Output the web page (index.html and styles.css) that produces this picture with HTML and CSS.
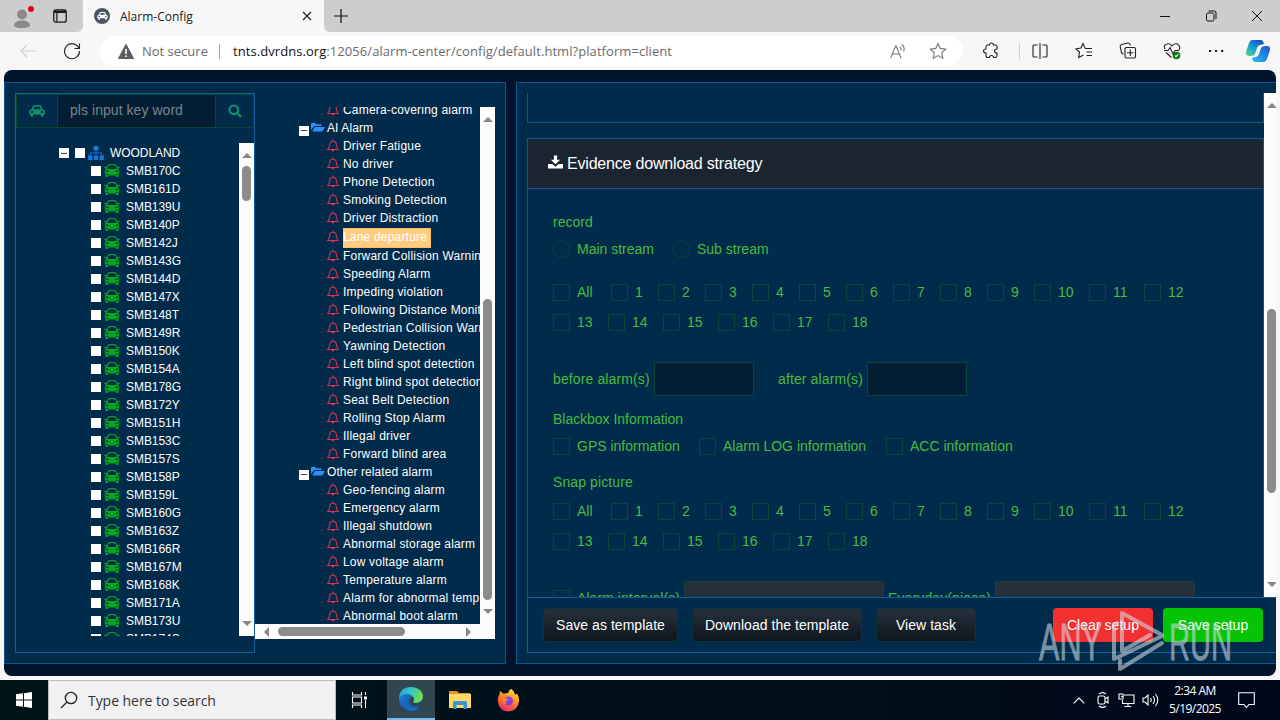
FILE: index.html
```html
<!DOCTYPE html>
<html lang="en">
<head>
    <meta charset="UTF-8">
    <title>Alarm-Config</title>
    <link rel="stylesheet" href="styles.css">
</head>
<body>

    <!-- shared icons -->
    <svg class="defs">
        <symbol id="car" viewBox="0 0 16 12">
            <path fill-rule="evenodd" d="M3.6 1.2Q4 0 5.300 0H10.700Q12 0 12.400 1.200L13.300 4.200Q15.800 4.500 15.800 6.500V9.500H14.300V10.800A1.200 1.200 0 0 1 11.900 10.800V9.500H4.100V10.800A1.200 1.200 0 0 1 1.700 10.800V9.500H.2V6.500Q.2 4.500 2.700 4.200ZM5.300 1.600L4.500 4.200H11.500L10.700 1.600ZM3.200 5.700A1.200 1.200 0 1 0 3.200 8.100A1.200 1.200 0 1 0 3.200 5.700ZM12.800 5.700A1.200 1.200 0 1 0 12.800 8.100A1.200 1.200 0 1 0 12.800 5.700Z"/>
        </symbol>
        <symbol id="taxi" viewBox="0 0 16 13">
            <path d="M2.500 4.500L4.500 1Q8 0 11.500 1L13.500 4.500M.3 3L2.500 4M15.700 3L13.500 4" fill="none" stroke="currentColor" stroke-width="1.200"/>
            <path d="M.8 6Q1 4.200 3 4.200L5 5H11L13 4.200Q15 4.200 15.200 6V10L14.500 11V13H12V11.500H4V13H1.500V11L.8 10Z"/>
            <path d="M1.500 5.800L4.800 7.200L4 8.300L2 7.600ZM14.500 5.800L11.200 7.200L12 8.300L14 7.600ZM2 9.500L4 10.300V10.900L2 10.500ZM14 9.500L12 10.300V10.900L14 10.500Z" fill="#033d2c"/>
        </symbol>
        <symbol id="bell" viewBox="0 0 12 13">
            <path d="M.7 10.500H11.300Q9.500 8.500 9.300 5.500Q9.200 2.200 6 2.200Q2.800 2.200 2.700 5.500Q2.500 8.500.7 10.500ZM6 .6V2.200" fill="none" stroke="currentColor" stroke-width="1.100"/>
            <path d="M4.300 10.800H7.700Q7.400 12.500 6 12.500Q4.600 12.500 4.300 10.800Z"/>
        </symbol>
        <symbol id="folder" viewBox="0 0 14 9">
            <path d="M0 7V.8Q0 0 .8 0H4.300L5.300 1.200H10.500V3H3.200ZM1.300 8.500L3.700 4H13.800L11.500 8.500Z"/>
        </symbol>
        <symbol id="sitemap" viewBox="0 0 16 14">
            <path d="M5.500 0H10.500V4.500H5.500ZM0 9.500H4.500V14H0ZM5.800 9.500H10.200V14H5.800ZM11.500 9.500H16V14H11.500Z"/>
            <path d="M8 4V10M2.300 10V7H13.700V10" fill="none" stroke="currentColor"/>
        </symbol>
    </svg>

    <header class="tabbar">
        <div class="tab-left">
            <svg class="profile" viewBox="0 0 24 24"><circle cx="11" cy="9.500" r="5" fill="#8b8886"/><path d="M3 21Q3 15.500 11 15.500T19 21Q17 23 11 23T3 21Z" fill="#8b8886"/><circle cx="20" cy="4" r="3" fill="#e20613"/></svg>
            <svg class="tabs-icon" viewBox="0 0 14 14"><rect x=".8" y=".8" width="12.400" height="12.400" rx="2" fill="none" stroke="#1a1a1a" stroke-width="1.300"/><path d="M1 1.500H13V4H4.500V13H3.300V4H1Z" fill="#1a1a1a"/></svg>
        </div>
        <div class="tab">
            <span class="favicon"><svg><use href="#car"/></svg></span>
            <span class="tab-title">Alarm-Config</span>
            <svg class="tab-close" viewBox="0 0 10 10"><path d="M1 1L9 9M9 1L1 9"/></svg>
        </div>
        <div class="tab-rest">
            <svg class="plus" viewBox="0 0 14 14"><path d="M7 0V14M0 7H14"/></svg>
            <div class="window-buttons">
                <svg viewBox="0 0 12 12"><path d="M1 6.500H11"/></svg>
                <svg viewBox="0 0 12 12"><rect x="1.500" y="3" width="7.500" height="8" rx="1.500"/><path d="M3.500 1H9Q11 1 11 3V9"/></svg>
                <svg viewBox="0 0 12 12"><path d="M1 1L11 11M11 1L1 11"/></svg>
            </div>
        </div>
    </header>

    <div class="toolbar">
        <svg class="back" viewBox="0 0 16 14"><path d="M16 7H1M7 1L1 7L7 13"/></svg>
        <svg class="reload" viewBox="0 0 18 18"><path d="M16 6.500A7.500 7.500 0 1 0 16.500 9M16.500 1.500V6.500H11.500"/></svg>
        <div class="address">
            <svg class="warn" viewBox="0 0 16 15"><path d="M8 .5L15.700 15H.3Z" fill="#5c5c5c" stroke="#5c5c5c" stroke-linejoin="round"/><path d="M8 5V10M8 11.500V13" stroke="#fff" stroke-width="1.600"/></svg>
            <span class="not-secure">Not secure</span>
            <span class="divider"></span>
            <span class="url"><b>tnts.dvrdns.org</b>:12056/alarm-center/config/default.html?platform=client</span>
            <svg class="read" viewBox="0 0 16 16"><path d="M.7 15L5.500 3H6.200L11 15M2.500 11H9.300M10 4Q11.500 5.500 10.700 7.500M12 1.500Q15.500 4.500 13.500 8.500"/></svg>
            <svg class="star" viewBox="0 0 18 18"><path d="M9 1.500L11.300 6.400L16.700 7.100L12.800 10.800L13.800 16.200L9 13.600L4.200 16.200L5.200 10.800L1.300 7.100L6.700 6.400Z"/></svg>
        </div>
        <div class="tools">
            <svg viewBox="0 0 18 18"><path d="M5 3H7.500Q7.500 1 9.500 1T11.500 3H13Q15 3 15 5V7Q12.500 7 12.500 9T15 11V13Q15 15.500 13 15.500H11.500Q11.500 13.500 9.500 13.500T7.500 15.500H6Q4 15.500 4 13.500V11Q1.500 11 1.500 9T4 7V5Q4 3 5 3Z"/></svg>
            <span class="tool-line"></span>
            <svg viewBox="0 0 18 18"><path d="M6.500 3H3Q2 3 2 4V14Q2 15 3 15H6.500M11.500 3H15Q16 3 16 4V14Q16 15 15 15H11.500M9 1V17"/></svg>
            <svg viewBox="0 0 18 18"><path d="M11 6.500H10.300L8 1.500L6 6L1 6.800L4.500 10L3.700 15.500L8.500 13M11 6.500H17M11.500 10H17M11.500 13.500H17"/></svg>
            <svg viewBox="0 0 18 18"><path d="M4.500 12Q3 12 2.500 10.500L1.200 4.500Q1 3 2.500 2.500L9 1Q10.700.8 11.500 3.500M7 5.500H15Q16.500 5.500 16.500 7V14.500Q16.500 16 15 16H7.500Q6 16 6 14.500V6.500ZM11.300 7.500V14M8 10.700H14.500"/></svg>
            <svg viewBox="0 0 18 18"><path d="M2 7Q0 3 4 2Q7 1 9 4Q11 1 14.500 2Q18 4 16 8M1 8.500H5L7 5.500L10 12L12 8.500H16M3 10.500L8.500 15.500"/><circle cx="13.500" cy="13.500" r="3.800" fill="#107c10" stroke="none"/><path d="M12 13.500L13 14.700L15.200 12.300" stroke="#fff"/></svg>
            <svg viewBox="0 0 18 18"><path d="M2 9H4.200M8 9H10.200M14 9H16.200" stroke-width="2.200"/></svg>
        </div>
        <svg class="copilot" viewBox="0 0 24 22">
            <defs>
                <linearGradient id="cg" x1="0" y1="1" x2=".7" y2="0"><stop offset="0" stop-color="#58d68a"/><stop offset=".5" stop-color="#17a5cf"/><stop offset="1" stop-color="#1556c9"/></linearGradient>
                <linearGradient id="ch" x1="0" y1="1" x2="1" y2="0"><stop offset="0" stop-color="#1fc0f5"/><stop offset="1" stop-color="#2353cf"/></linearGradient>
            </defs>
            <path d="M6 0H15Q17 0 18 4L14 5Q12 5 11 8L9 14Q8 16 5 16H3Q-1 16 .3 11L3 3Q4 0 6 0Z" fill="url(#cg)"/>
            <path d="M18 22H9Q7 22 6 18L10 17Q12 17 13 14L15 8Q16 6 19 6H21Q25 6 23.700 11L21 19Q20 22 18 22Z" fill="url(#ch)"/>
        </svg>
    </div>

    <main class="page">
        <section class="panel left-panel">
            <div class="vehicles">
                <div class="search">
                    <span class="search-car"><svg><use href="#car"/></svg></span>
                    <span class="search-input">pls input key word</span>
                    <span class="search-btn"><svg viewBox="0 0 14 14"><circle cx="5.800" cy="5.800" r="4.300" fill="none" stroke="currentColor" stroke-width="2.200"/><path d="M9 9L13 13" stroke="currentColor" stroke-width="2.400"/></svg></span>
                </div>
                <div class="tree-wrap">
                    <div class="tree" id="vehicleTree">
                        <div class="row root"><i class="toggle"></i><i class="check"></i><svg class="site"><use href="#sitemap"/></svg><span>WOODLAND</span></div>
                    </div>
                    <div class="vbar"><i class="up"></i><i class="thumb"></i><i class="down"></i></div>
                </div>
            </div>
            <div class="alarms">
                <div class="alarm-tree" id="alarmTree"></div>
                <div class="vbar"><i class="up"></i><i class="thumb"></i><i class="down"></i></div>
                <div class="hbar"><i class="prev"></i><i class="thumb"></i><i class="next"></i></div>
            </div>
        </section>

        <section class="panel right-panel">
            <div class="scroll">
                <div class="scroll-content">
                    <div class="card-end"></div>
                    <div class="card">
                        <h2><svg viewBox="0 0 16 14"><path d="M6.300 0H9.700V4.500H13L8 9.500L3 4.500H6.300ZM0 9H4.500L8 12L11.500 9H16V14H0Z"/></svg>Evidence download strategy</h2>
                        <div class="form">
                            <p class="label">record</p>
                            <div class="options">
                                <label class="opt stream"><i class="radio"></i>Main stream</label>
                                <label class="opt"><i class="radio"></i>Sub stream</label>
                            </div>
                            <div class="channels record-channels"></div>
                            <div class="inputs">
                                <span class="w97">before alarm(s)</span><i class="input"></i>
                                <span class="w85">after alarm(s)</span><i class="input"></i>
                            </div>
                            <p class="label blackbox">Blackbox Information</p>
                            <div class="options">
                                <label class="opt gps"><i class="box"></i>GPS information</label>
                                <label class="opt log"><i class="box"></i>Alarm LOG information</label>
                                <label class="opt"><i class="box"></i>ACC information</label>
                            </div>
                            <p class="label snap">Snap picture</p>
                            <div class="channels snap-channels"></div>
                            <div class="inputs interval">
                                <label class="opt"><i class="box"></i>Alarm interval(s)</label><i class="input wide"></i>
                                <span class="w103">Everyday(piece)</span><i class="input wide"></i>
                            </div>
                        </div>
                    </div>
                </div>
                <div class="vbar"><i class="up"></i><i class="thumb"></i><i class="down"></i></div>
            </div>
            <footer class="actions">
                <button class="btn save-tpl">Save as template</button>
                <button class="btn download">Download the template</button>
                <button class="btn view">View task</button>
                <button class="btn red">Clear setup</button>
                <button class="btn green">Save setup</button>
            </footer>
        </section>
    </main>

    <div class="taskbar">
        <div class="start"><svg viewBox="0 0 16 16"><path d="M0 2.300L7 1.300V7.500H0ZM8 1.200L16 0V7.500H8ZM0 8.500H7V14.700L0 13.700ZM8 8.500H16V16L8 14.800Z"/></svg></div>
        <div class="find"><svg viewBox="0 0 18 18"><circle cx="11" cy="7" r="5.700"/><path d="M7 11L1 17"/></svg>Type here to search</div>
        <div class="task"><svg class="taskview" viewBox="0 0 18 16"><path d="M1.500 0V3H10.500V0M1.500 16V13H10.500V16M1.500 5H10.500V11H1.500ZM14.500 0V3M14.500 8V16"/><rect x="13" y="4.500" width="3" height="3" fill="#fff" stroke="none"/></svg></div>
        <div class="task active">
            <svg class="edge" viewBox="0 0 24 24">
                <defs>
                    <linearGradient id="e1" x1="0" y1="0" x2="1" y2=".4"><stop offset="0" stop-color="#219dd8"/><stop offset=".5" stop-color="#34c5c8"/><stop offset="1" stop-color="#6ddc52"/></linearGradient>
                    <linearGradient id="e2" x1="0" y1="0" x2=".6" y2="1"><stop offset="0" stop-color="#1d8fdf"/><stop offset="1" stop-color="#1150a4"/></linearGradient>
                </defs>
                <circle cx="12" cy="12" r="12" fill="url(#e2)"/>
                <path d="M0 11Q1 0 12 0Q24 1 24 10Q23 16 16 16Q14 16 14 14.500Q16 13 14.500 10Q11 6 6 7Q2 8 0 11Z" fill="url(#e1)"/>
                <path d="M14 14.500Q14 16 17 16Q21 16 24 12.500Q24 18 20 19Q13 21 10.500 16Q9 12 12.500 9.500Q16 11 14 14.500Z" fill="#31474f"/>
                <path d="M11 10Q7 17 13 20Q18 21.500 21.500 19Q17 24.500 11 24Q5 21 5.500 15Q6 10.500 11 10Z" fill="#1769bd"/>
            </svg>
        </div>
        <div class="task"><svg class="explorer" viewBox="0 0 22 18"><path d="M0 1Q0 0 1 0H8L10 2H21V5H0Z" fill="#e29a1c"/><path d="M0 3H22V17H0Z" fill="#ffd76b"/><path d="M4 18V12Q4 10 6 10H16Q18 10 18 12V18H14.500V14H7.500V18Z" fill="#3c93cf"/></svg></div>
        <div class="task"><svg class="firefox" viewBox="0 0 24 24">
            <defs><linearGradient id="ff" x1=".8" y1="0" x2=".3" y2="1"><stop offset="0" stop-color="#fff04a"/><stop offset=".45" stop-color="#ff8a21"/><stop offset="1" stop-color="#f0246c"/></linearGradient></defs>
            <path d="M3 2L7 5L12 4Q12 1 15 0Q18 2 19 6L21 5Q23.500 9 23 13Q21 23 12 23.500Q2 23 1 13Q.5 8 2.500 6Z" fill="url(#ff)"/>
            <circle cx="12" cy="12.500" r="4.800" fill="#8a3fd6"/><path d="M6 9L12 10.500Q12 12 9 12.500Q8 15 10 16Q6 16 6 9Z" fill="#ff8a21"/>
        </svg></div>
        <div class="tray">
            <svg class="t-up" viewBox="0 0 12 7"><path d="M.7 6.300L6 1L11.300 6.300"/></svg>
            <svg class="t-meet" viewBox="0 0 14 16"><path d="M3 2Q6.500-.8 10 2M3 14Q6.500 16.800 10 14"/><rect x="2" y="4" width="7" height="8" rx="1.500"/><path d="M9 7L12 5V11L9 9"/></svg>
            <svg class="t-net" viewBox="0 0 17 15"><path d="M6 2H16V10.500H4.500V7M1 1H5V6H1ZM3 3.500H5M10 10.500V13.500M6.500 13.500H13"/></svg>
            <svg class="t-vol" viewBox="0 0 17 14"><path d="M1 5H3L6 2V12L3 9H1ZM8.500 5Q10 7 8.500 9M11 3Q14 7 11 11M13.500 1Q18 7 13.500 13"/></svg>
            <div class="clock"><div>2:34 AM</div><div>5/19/2025</div></div>
            <svg class="t-note" viewBox="0 0 17 17"><path d="M.7.7H16.300V12.500H11L8.500 15.500L6 12.500H.7Z"/></svg>
        </div>
    </div>

    <!-- recording watermark, lies over the page -->
    <svg class="watermark" viewBox="0 0 196 64">
        <text x="1" y="51" textLength="63" lengthAdjust="spacingAndGlyphs">ANY</text>
        <text x="131" y="51" textLength="63" lengthAdjust="spacingAndGlyphs">RUN</text>
        <path d="M84 33V4L124 26M84 13V42L112 26M79 14L76 17V50L124 27M82 51V60L124 34"/>
    </svg>

    <script src="script.js"></script>
</body>
</html>
```
FILE: styles.css
```css
* {
    box-sizing: border-box;
}
body {
    margin: 0;
    width: 1280px;
    height: 720px;
    overflow: hidden;
    display: flex;
    flex-direction: column;
    background: #f7f7f7;
    font-family: "Liberation Sans", Arial, sans-serif;
    position: relative;
}
svg {
    display: block;
    flex: none;
    fill: currentColor;
}
i, span {
    flex: none;
}
.defs {
    position: absolute;
    width: 0;
    height: 0;
}

/* browser tabs */
.tabbar {
    height: 32px;
    display: flex;
    background: #f7f7f7;
    font-family: "Open Sans", sans-serif;
}
.tab-left {
    width: 83px;
    background: #cdcdcd;
    border-bottom-right-radius: 6px;
    display: flex;
    align-items: center;
    padding-left: 11px;
}
.profile {
    width: 24px;
    height: 24px;
    margin-top: 1px;
}
.tabs-icon {
    width: 14px;
    height: 14px;
    margin-left: 18px;
}
.tab {
    width: 241px;
    display: flex;
    align-items: center;
    padding-left: 11px;
    font-size: 12px;
    color: #1b1b1b;
}
.favicon {
    width: 16px;
    height: 16px;
    border-radius: 50%;
    background: #4a5568;
    color: #fff;
    display: flex;
    align-items: center;
    justify-content: center;
}
.favicon svg {
    width: 11px;
    height: 8px;
}
.tab-title {
    width: 182px;
    margin-left: 10px;
}
.tab-close {
    width: 10px;
    height: 10px;
    stroke: #222;
    stroke-width: 1.2;
}
.tab-rest {
    flex: 1;
    background: #cdcdcd;
    border-bottom-left-radius: 6px;
    display: flex;
    align-items: center;
    justify-content: space-between;
    padding: 0 17px 0 10px;
}
.plus {
    width: 14px;
    height: 14px;
    stroke: #111;
    stroke-width: 1.2;
}
.window-buttons {
    display: flex;
    gap: 34px;
}
.window-buttons svg {
    width: 12px;
    height: 12px;
    fill: none;
    stroke: #111;
}

/* toolbar */
.toolbar {
    height: 38px;
    display: flex;
    align-items: center;
    padding-left: 20px;
    font-family: "Open Sans", sans-serif;
    font-size: 13px;
    color: #6b6b6b;
}
.toolbar svg {
    fill: none;
    stroke: #222;
    stroke-width: 1.1;
}
.toolbar .back {
    width: 16px;
    height: 14px;
    stroke: #cfcfcf;
}
.reload {
    width: 18px;
    height: 18px;
    margin-left: 27px;
}
.address {
    width: 863px;
    height: 30px;
    margin-left: 19px;
    background: #fff;
    border-radius: 15px;
    display: flex;
    align-items: center;
    padding-left: 18px;
}
.warn {
    width: 16px;
    height: 15px;
}
.not-secure {
    width: 77px;
    margin-left: 8px;
}
.divider {
    width: 1px;
    height: 15px;
    background: #a5a5a5;
}
.url {
    width: 657px;
    margin-left: 13px;
    letter-spacing: 0.065px;
}
.url b {
    font-weight: 400;
    color: #111;
}
.address .read, .address .star {
    stroke: #777;
    width: 16px;
    height: 16px;
}
.address .star {
    width: 18px;
    height: 18px;
    margin-left: 23px;
}
.tools {
    display: flex;
    align-items: center;
    margin-left: 19px;
    gap: 26px;
}
.tools svg {
    width: 18px;
    height: 18px;
}
.tool-line {
    width: 1px;
    height: 16px;
    margin: 0 -15px 0 -7px;
    background: #cfcfcf;
}
.copilot {
    width: 24px;
    height: 22px;
    margin-left: 21px;
}
.toolbar .copilot {
    stroke: none;
}

/* page */
.page {
    height: 606px;
    margin: 0 4px;
    padding-top: 12px;
    background: #00142b;
    border-radius: 8px;
    display: flex;
    gap: 10px;
    overflow: hidden;
}
.panel {
    height: 582px;
    background: #002b4b;
    border: 1px solid #0e5788;
    flex: none;
}
.left-panel {
    width: 502px;
    display: flex;
    padding: 10px 0 0 10px;
}
.vehicles {
    width: 240px;
    height: 560px;
    border: 1px solid #0e5f97;
}
.search {
    height: 34px;
    display: flex;
    border: 1px solid #08492b;
    color: #12906b;
}
.search span {
    display: flex;
    align-items: center;
    justify-content: center;
}
.search-car {
    width: 41px;
    border-right: 1px solid #08492b;
}
.search-car svg {
    width: 16px;
    height: 12px;
}
.search .search-input {
    width: 158px;
    background: #031e33;
    border-right: 1px solid #08492b;
    color: #7b858b;
    font-size: 14px;
    letter-spacing: 0.05px;
    justify-content: flex-start;
    padding: 0 0 2px 12px;
}
.search-btn {
    flex: 1;
}
.search-btn svg {
    width: 14px;
    height: 14px;
}
.tree-wrap {
    display: flex;
    margin-top: 15px;
    height: 493px;
}
.tree {
    width: 223px;
    padding-top: 1px;
    overflow: hidden;
}
.row {
    height: 18px;
    display: flex;
    align-items: center;
    font-size: 12px;
    color: #fff;
    white-space: nowrap;
}
.tree .row {
    padding-left: 75px;
    letter-spacing: -0.06px;
}
.tree .root {
    padding-left: 43px;
}
.toggle {
    width: 10px;
    height: 10px;
    background: #fff linear-gradient(#444, #444) center / 6px 1px no-repeat;
}
.check {
    width: 10px;
    height: 10px;
    background: #fff;
}
.root .check {
    margin-left: 6px;
}
.site {
    width: 16px;
    height: 14px;
    margin: 0 6px 0 3px;
    color: #1674dd;
}
.taxi {
    width: 16px;
    height: 13px;
    margin: -1px 6px 0 3px;
    color: #08a325;
}
.vbar {
    width: 15px;
    background: #fcfcfc;
    display: flex;
    flex-direction: column;
    align-items: center;
    flex: none;
}
.vbar .thumb {
    width: 9px;
    border-radius: 5px;
    background: #8b8b8b;
}
.up, .down {
    width: 0;
    height: 0;
    border: 5px solid transparent;
}
.up {
    border-top: 0;
    border-bottom: 5px solid #858585;
}
.down {
    border-bottom: 0;
    border-top: 5px solid #858585;
    margin-top: auto;
}
.tree-wrap .up {
    margin-top: 10px;
}
.tree-wrap .thumb {
    height: 35px;
    margin-top: 8px;
}
.tree-wrap .down {
    margin-bottom: 10px;
}

/* alarm tree */
.alarms {
    width: 240px;
    height: 532px;
    margin-top: 14px;
    display: grid;
    grid-template-columns: 225px 15px;
    grid-template-rows: 517px 15px;
}
.alarm-tree {
    overflow: hidden;
}
.alarm-tree .row {
    padding-left: 72px;
    letter-spacing: 0.19px;
}
.alarm-tree .row:first-child {
    margin-top: -6px;
}
.alarm-tree .group {
    padding-left: 44px;
    letter-spacing: 0.1px;
}
.group .toggle {
    margin: 5px 2px 0 0;
}
.group svg {
    width: 14px;
    height: 9px;
    margin: -1px 2px 0 0;
    color: #2b8ffb;
}
.bell {
    width: 12px;
    height: 13px;
    margin: -1px 4px 0 0;
    color: #e0304f;
}
.alarm-tree .selected {
    height: 20px;
}
.selected span {
    height: 20px;
    line-height: 17px;
    margin: 1px 0 0;
    padding: 0 3px 0 0;
    background: #ffcc80;
    border: 1px solid #ffbe66;
    border-left-width: 0;
}
.alarms .vbar {
    grid-row: span 2;
}
.alarms .up {
    margin-top: 10px;
}
.alarms .vbar .thumb {
    height: 301px;
    margin-top: 177px;
}
.alarms .down {
    margin-bottom: 25px;
}
.hbar {
    background: #fcfcfc;
    display: flex;
    align-items: center;
}
.prev, .next {
    border: 5px solid transparent;
}
.prev {
    border-left: 0;
    border-right: 5px solid #858585;
    margin-left: 9px;
}
.next {
    border-right: 0;
    border-left: 5px solid #858585;
    margin-left: 61px;
}
.hbar .thumb {
    width: 127px;
    height: 9px;
    margin-left: 9px;
    border-radius: 5px;
    background: #8b8b8b;
}

/* setup form */
.right-panel {
    width: 775px;
    padding: 10px 0 0 10px;
}
.scroll {
    height: 504px;
    display: flex;
    overflow: hidden;
}
.scroll-content {
    width: 737px;
    overflow: hidden;
}
.card-end {
    height: 30px;
    border: 1px solid #0e5788;
    border-top: 0;
}
.card {
    margin-top: 15px;
    border: 1px solid #0e5788;
    height: 520px;
}
.card h2 {
    height: 50px;
    margin: 0;
    padding-left: 20px;
    display: flex;
    align-items: center;
    background: #1b2531;
    border-bottom: 1px solid #0e5788;
    color: #fff;
    font-size: 16px;
    font-weight: 400;
    letter-spacing: -0.19px;
}
.card h2 svg {
    width: 15px;
    height: 14px;
    margin: -3px 4px 0 0;
}
.form {
    padding: 22px 0 0 25px;
    color: #4cba3e;
    font-size: 14px;
}
.label {
    margin: 0;
    height: 22px;
    line-height: 22px;
    letter-spacing: 0.03px;
}
.blackbox {
    margin-top: 12px;
    letter-spacing: -0.03px;
}
.snap {
    margin-top: 8px;
    letter-spacing: 0.1px;
}
.options {
    height: 33px;
    padding-bottom: 1px;
    display: flex;
}
.opt {
    display: flex;
    align-items: center;
    white-space: nowrap;
    flex: none;
}
.radio, .box {
    width: 17px;
    height: 17px;
    margin-right: 7px;
    border: 1px solid #0a473b;
}
.radio {
    border-radius: 50%;
}
.stream {
    width: 120px;
}
.gps {
    width: 146px;
}
.log {
    width: 187px;
}
.channels {
    display: flex;
    flex-wrap: wrap;
    padding-right: 60px;
}
.record-channels {
    margin-top: 11px;
}
.snap-channels {
    margin-top: 3px;
}
.channels .opt {
    width: 55px;
    height: 30px;
}
.channels .one {
    width: 47px;
}
.channels .all {
    width: 58px;
}
.inputs {
    height: 34px;
    margin-top: 25px;
    display: flex;
    align-items: center;
    letter-spacing: 0.12px;
    line-height: 18px;
}
.inputs span {
    margin-top: -1px;
}
.input {
    width: 100px;
    height: 34px;
    margin: 0 24px 0 4px;
    background: #031e33;
    border: 1px solid #0b4638;
}
.interval .opt {
    width: 127px;
    letter-spacing: 0.06px;
}
.input.wide {
    width: 200px;
    margin-right: 4px;
    background: #25303b;
    border-color: #1c3e39;
}
.w97 {
    width: 97px;
}
.w85 {
    width: 85px;
}
.w103 {
    width: 103px;
}
.scroll .up {
    margin-top: 10px;
}
.scroll .thumb {
    height: 184px;
    margin-top: 201px;
}
.scroll .down {
    margin-bottom: 10px;
}
.actions {
    height: 56px;
    border: 1px solid #0e5f97;
    display: flex;
    align-items: center;
    padding-left: 15px;
}
.btn {
    height: 34px;
    padding: 0;
    border: 1px solid #0b3338;
    border-radius: 4px;
    background: linear-gradient(#25303b, #0f171f);
    color: #fff;
    font-family: inherit;
    font-size: 14px;
    letter-spacing: 0.04px;
    white-space: nowrap;
    flex: none;
}
.save-tpl {
    width: 135px;
}
.download {
    width: 170px;
    margin-left: 14px;
}
.view {
    width: 100px;
    margin-left: 14px;
}
.red {
    width: 100px;
    margin-left: 77px;
    background: #f23030;
    border: 0;
}
.green {
    width: 100px;
    margin-left: 10px;
    background: #05c305;
    border: 0;
}

/* windows taskbar */
.taskbar {
    height: 40px;
    margin-top: 4px;
    background: linear-gradient(90deg, #001419, #001019 60%, #01061a);
    display: flex;
    color: #fff;
}
.start {
    width: 48px;
    display: flex;
    align-items: center;
    justify-content: center;
}
.start svg {
    width: 16px;
    height: 16px;
}
.find {
    width: 288px;
    display: flex;
    align-items: center;
    padding-left: 11px;
    background: #f1f1f1;
    border: 1px solid #bdbdbd;
    color: #333;
    font-family: "Open Sans", sans-serif;
    font-size: 14px;
    letter-spacing: -0.05px;
}
.find svg {
    width: 18px;
    height: 18px;
    margin-right: 10px;
    fill: none;
    stroke: #222;
    stroke-width: 1.3;
}
.task {
    width: 48px;
    display: flex;
    align-items: center;
    justify-content: center;
}
.task + .task:not(.active) {
    width: 49px;
}
.active {
    margin-left: 3px;
    background: #31474f;
    border-bottom: 2px solid #76b9ed;
}
.taskview {
    width: 18px;
    height: 16px;
    fill: none;
    stroke: #fff;
    stroke-width: 1.1;
}
.edge {
    width: 24px;
    height: 24px;
}
.explorer {
    width: 22px;
    height: 18px;
}
.firefox {
    width: 23px;
    height: 23px;
}
.tray {
    display: flex;
    align-items: center;
    margin-left: auto;
    padding-right: 25px;
}
.tray svg {
    fill: none;
    stroke: #fff;
    stroke-width: 1.1;
}
.t-up {
    width: 12px;
    height: 7px;
}
.t-meet {
    width: 14px;
    height: 16px;
    margin-left: 11px;
}
.t-net {
    width: 17px;
    height: 15px;
    margin-left: 8px;
}
.t-vol {
    width: 17px;
    height: 14px;
    margin-left: 7px;
}
.clock {
    width: 56px;
    margin: 0 15px 0 8px;
    text-align: center;
    white-space: nowrap;
    font-family: "Open Sans", sans-serif;
    font-size: 12px;
    line-height: 18px;
    letter-spacing: -0.55px;
}
.t-note {
    width: 17px;
    height: 17px;
}

.watermark {
    position: absolute;
    left: 1038px;
    top: 609px;
    width: 196px;
    height: 64px;
    opacity: 0.58;
    fill: #d5dbe2;
    font-family: "Liberation Sans", Arial, sans-serif;
    font-size: 52px;
}
.watermark text {
    stroke: #d5dbe2;
    stroke-width: 0.8;
}
.watermark path {
    fill: none;
    stroke: #d5dbe2;
    stroke-width: 4;
    stroke-linejoin: round;
    stroke-linecap: round;
}
```
FILE: script.js
```js
const vehicles = ['170C', '161D', '139U', '140P', '142J', '143G', '144D', '147X', '148T',
    '149R', '150K', '154A', '178G', '172Y', '151H', '153C', '157S', '158P', '159L',
    '160G', '163Z', '166R', '167M', '168K', '171A', '173U', '174S'];

const alarms = [
    'Camera-covering alarm',
    '#AI Alarm',
    'Driver Fatigue', 'No driver', 'Phone Detection', 'Smoking Detection',
    'Driver Distraction', 'Lane departure', 'Forward Collision Warning',
    'Speeding Alarm', 'Impeding violation', 'Following Distance Monitoring',
    'Pedestrian Collision Warning', 'Yawning Detection', 'Left blind spot detection',
    'Right blind spot detection', 'Seat Belt Detection', 'Rolling Stop Alarm',
    'Illegal driver', 'Forward blind area',
    '#Other related alarm',
    'Geo-fencing alarm', 'Emergency alarm', 'Illegal shutdown', 'Abnormal storage alarm',
    'Low voltage alarm', 'Temperature alarm', 'Alarm for abnormal temp', 'Abnormal boot alarm'
];

document.getElementById('vehicleTree').innerHTML += vehicles.map(v =>
    `<div class="row"><i class="check"></i><svg class="taxi"><use href="#taxi"/></svg><span>SMB${v}</span></div>`
).join('');

document.getElementById('alarmTree').innerHTML = alarms.map(name => {
    if (name[0] === '#') {
        return `<div class="row group"><i class="toggle"></i><svg><use href="#folder"/></svg><span>${name.slice(1)}</span></div>`;
    }
    const selected = name === 'Lane departure' ? ' selected' : '';
    return `<div class="row${selected}"><svg class="bell"><use href="#bell"/></svg><span>${name}</span></div>`;
}).join('');

// "All" plus channels 1-18
document.querySelectorAll('.channels').forEach(el => {
    let html = '<label class="opt all"><i class="box"></i>All</label>';
    for (let i = 1; i <= 18; i++) {
        html += `<label class="opt${i < 10 ? ' one' : ''}"><i class="box"></i>${i}</label>`;
    }
    el.innerHTML = html;
});
```
